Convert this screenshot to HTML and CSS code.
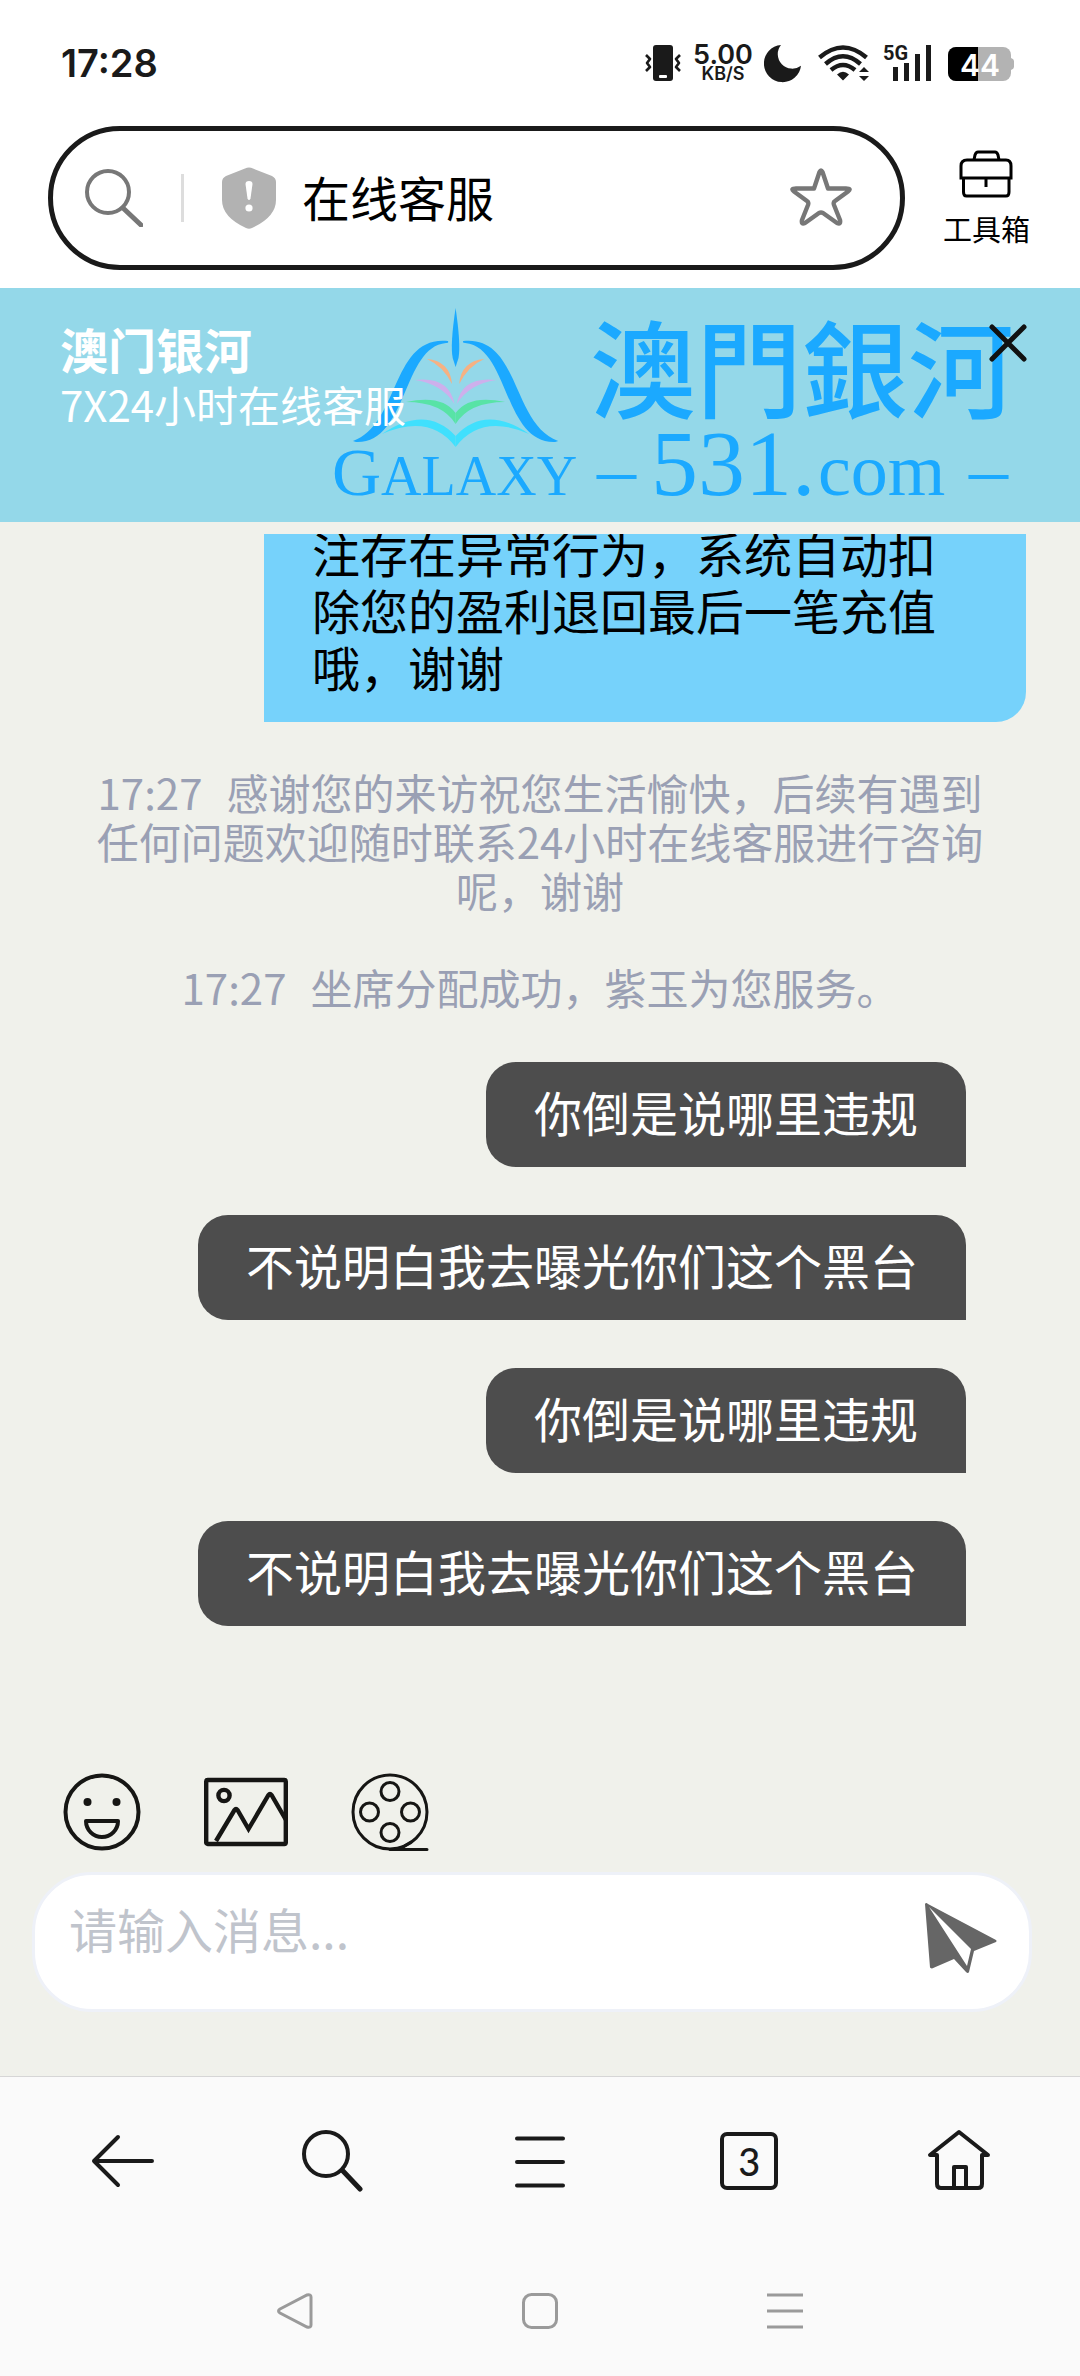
FILE: index.html
```html
<!DOCTYPE html>
<html lang="zh-CN">
<head>
  <meta charset="UTF-8">
  <meta name="viewport" content="width=device-width, initial-scale=1">
  <title>在线客服</title>
  <link rel="stylesheet" href="styles.css">
</head>
<body>
  <div class="status-bar">
    <span class="clock">17:28</span>
    <div class="status-icons">
      <svg width="38" height="40" viewBox="0 0 38 40">
        <rect x="9" y="2" width="20" height="36" rx="3" fill="#1a1a1a"/>
        <rect x="15" y="32" width="8" height="3" rx="1" fill="#fff"/>
        <path d="M2 12l4 4-3 4 3 4-4 4M36 12l-4 4 3 4-3 4 4 4" fill="none" stroke="#1a1a1a" stroke-width="2.6" stroke-linejoin="round"/>
      </svg>
      <div class="net-speed">
        <span class="speed-value">5.00</span>
        <span class="speed-unit">KB/S</span>
      </div>
      <svg width="40" height="40" viewBox="0 0 40 40">
        <path d="M17 2A18.6 18.6 0 1 0 37 22.7A14.5 14.5 0 0 1 17 2z" fill="#1a1a1a"/>
      </svg>
      <svg width="54" height="40" viewBox="0 0 54 40">
        <g fill="none" stroke="#1a1a1a" stroke-width="4.4">
          <path d="M3.500 14.500Q27-5.500 50.500 14.500"/>
          <path d="M9.500 21Q27 5.500 44.500 21"/>
          <path d="M15 27Q27 17 39 27"/>
        </g>
        <path d="M21 31.500Q27 26 33 31.500L27 37.500zM48 24l5 5H43zM48 38l5-5H43z" fill="#1a1a1a"/>
      </svg>
      <svg width="54" height="40" viewBox="0 0 54 40">
        <text x="1" y="17" class="signal-type">5G</text>
        <path d="M11 24h5v14h-5zM22 20h5v18h-5zM33 11h5v27h-5zM44 2h5v36h-5z" fill="#1a1a1a"/>
      </svg>
      <svg width="66" height="40" viewBox="0 0 66 40">
        <rect x="0" y="4" width="63" height="34" rx="8" fill="#b3b3b3"/>
        <path d="M63 15q3 1 3 3v6q0 2-3 3z" fill="#b3b3b3"/>
        <path d="M30 4H8a8 8 0 0 0-8 8v18a8 8 0 0 0 8 8h22z" fill="#000"/>
        <text x="32" y="33" text-anchor="middle" class="battery-level">44</text>
      </svg>
    </div>
  </div>

  <div class="browser-bar">
    <div class="address">
      <svg width="58" height="58" viewBox="0 0 58 58" fill="none" stroke="#777" stroke-width="4">
        <circle cx="23" cy="23" r="21"/>
        <path d="M38 39l18 17" stroke-width="5" stroke-linecap="round"/>
      </svg>
      <span class="divider"></span>
      <svg class="shield" width="54" height="62" viewBox="0 0 54 62">
        <path d="M23 1.500q4-2 8 0L50 9q4 2 4 6v18q0 17-24 28-3 1.500-6 0Q0 50 0 33V15q0-4 4-6z" fill="#b2b2b2"/>
        <path d="M23.500 17q0-3 3.500-3t3.500 3l-2 14.500q-1.500 3-3 0z" fill="#fff"/>
        <circle cx="27" cy="41" r="3.600" fill="#fff"/>
      </svg>
      <input class="address-input" type="text" value="在线客服" aria-label="地址">
      <button class="icon-btn" aria-label="收藏">
        <svg width="62" height="60" viewBox="0 0 62 60" fill="none" stroke="#777" stroke-width="4.4" stroke-linejoin="round">
          <path d="M29.500 4q1.500-3 3 0L38 20.500h18q6 0 2 3L45 33q-2 1-1 4l6 15q1 5-3 3L33 45q-2-1-4 0l-14 10q-4 2-3-3l6-15q1-3-1-4L4 23.500q-4-3 2-3h18z"/>
        </svg>
      </button>
    </div>
    <button class="toolbox">
      <svg width="54" height="48" viewBox="0 0 54 48" fill="none" stroke="#000" stroke-width="3">
        <path d="M15 10l1-5q1-3 3-3h17q2 0 3 3l1 5"/>
        <path d="M2 28V16q0-6 6-6h39q5 0 5 6v12z"/>
        <path d="M4.500 28v14q0 4 3 4H47q3 0 3-4V28M27 28v9"/>
      </svg>
      <span>工具箱</span>
    </button>
  </div>

  <header class="banner">
    <svg class="banner-logo" width="690" height="210" viewBox="0 0 690 210" fill="#1ba9ff">
      <path d="M125.600 8Q131 45 128.500 58L125.600 67L122.700 58Q120 45 125.600 8z"/>
      <g id="wing">
        <path d="M23 141C70 124 61 35 118 41Q119 43 116 43C72 47 78 144 26 142z"/>
        <path d="M97 59Q120 61 122 84Q113 66 97 59z" fill="#f5b183"/>
        <path d="M85 80Q119 76 124.500 104Q112 84 85 80z" fill="#cdb0ec"/>
        <path d="M76 102Q112 94 125.600 113V124Q112 102 76 102z" fill="#58e3a6"/>
        <path d="M52 134Q96 104 125.600 136V147Q100 113 52 134z" fill="#40e0fd"/>
      </g>
      <use href="#wing" transform="translate(251.200 0) scale(-1 1)"/>
      <text x="2" y="195" class="logo-latin logo-cap">G<tspan class="logo-small">ALAXY</tspan></text>
      <text x="260" y="110" class="logo-name">澳門銀河</text>
      <text x="267" y="195" class="logo-latin logo-dash">–</text>
      <text x="321" y="195" class="logo-latin logo-digits">531.</text>
      <text x="488" y="195" class="logo-latin logo-com">com</text>
      <text x="639" y="195" class="logo-latin logo-dash">–</text>
    </svg>
    <div class="banner-text">
      <h1>澳门银河</h1>
      <p>7X24小时在线客服</p>
    </div>
    <button class="icon-btn close-btn" aria-label="关闭">
      <svg width="38" height="38" viewBox="0 0 38 38">
        <path d="M3 3l32 32M35 3L3 35" stroke="#111" stroke-width="5" stroke-linecap="round"/>
      </svg>
    </button>
  </header>

  <main class="chat">
    <div class="bubble agent">注存在异常行为，系统自动扣除您的盈利退回最后一笔充值哦，谢谢</div>
    <p class="notice"><span class="time">17:27</span>感谢您的来访祝您生活愉快，后续有遇到任何问题欢迎随时联系24小时在线客服进行咨询呢，谢谢</p>
    <p class="notice"><span class="time">17:27</span>坐席分配成功，紫玉为您服务。</p>
    <div class="bubble visitor">你倒是说哪里违规</div>
    <div class="bubble visitor">不说明白我去曝光你们这个黑台</div>
    <div class="bubble visitor">你倒是说哪里违规</div>
    <div class="bubble visitor">不说明白我去曝光你们这个黑台</div>
  </main>

  <form class="composer">
    <div class="composer-tools">
      <button type="button" class="icon-btn" aria-label="表情">
        <svg width="78" height="78" viewBox="0 0 78 78" fill="none" stroke="#161614" stroke-width="4">
          <circle cx="39" cy="39" r="36.500"/>
          <circle cx="24.500" cy="29" r="4" fill="#161614" stroke="none"/>
          <circle cx="53.500" cy="29" r="4" fill="#161614" stroke="none"/>
          <path d="M23 48h32a16 16 0 0 1-32 0z" stroke-linejoin="round"/>
        </svg>
      </button>
      <button type="button" class="icon-btn" aria-label="图片">
        <svg width="84" height="78" viewBox="0 0 84 78" fill="none" stroke="#161614" stroke-width="4.400">
          <rect x="2.200" y="7" width="79.600" height="64" rx="1.500"/>
          <circle cx="20" cy="22.500" r="5.600"/>
          <path d="M12 68l18.500-31q1.500-2 3 0L44.500 56l20-34q1.500-2 3 0L82 47"/>
        </svg>
      </button>
      <button type="button" class="icon-btn" aria-label="视频">
        <svg width="78" height="78" viewBox="0 0 78 78" fill="none" stroke="#161614" stroke-width="3">
          <circle cx="39" cy="39" r="37"/>
          <circle cx="39" cy="18.500" r="9"/>
          <circle cx="39" cy="59.500" r="9"/>
          <circle cx="18.500" cy="39" r="9"/>
          <circle cx="59.500" cy="39" r="9"/>
          <path d="M39 76.400h37M50 75l10-6" stroke-linecap="round"/>
        </svg>
      </button>
    </div>
    <div class="composer-box">
      <textarea placeholder="请输入消息..." aria-label="消息"></textarea>
      <button type="button" class="icon-btn" aria-label="发送">
        <svg width="72" height="78" viewBox="0 0 72 78">
          <path fill="#666" fill-rule="evenodd" d="M0 1q1-2 3 0l68 36q1 1 0 2L49 48l-5 21q-1 2-3 0L29 56 7 65.500q-1 0-2-1zM4 4l38 59 4-17z"/>
        </svg>
      </button>
    </div>
  </form>

  <footer class="bottom">
    <nav class="browser-nav">
      <button class="icon-btn" aria-label="后退">
        <svg width="64" height="64" viewBox="0 0 64 64"><path d="M28 8L4 32l24 24M4 32h58"/></svg>
      </button>
      <button class="icon-btn" aria-label="搜索">
        <svg width="64" height="64" viewBox="0 0 64 64"><circle cx="27" cy="25" r="22"/><path d="M43.500 41.500L61 60" stroke-width="5"/></svg>
      </button>
      <button class="icon-btn" aria-label="菜单">
        <svg width="64" height="64" viewBox="0 0 64 64"><path d="M9 9.500h46M9 33h46M9 56.500h46"/></svg>
      </button>
      <button class="tab-count" aria-label="标签页">3</button>
      <button class="icon-btn" aria-label="主页">
        <svg width="64" height="64" viewBox="0 0 64 64"><path d="M33 3L4 26h7v29q0 4 4 4h37q4 0 4-4V26h6zM28 59V38h12v21"/></svg>
      </button>
    </nav>
    <div class="system-nav">
      <button class="icon-btn" aria-label="返回">
        <svg width="36" height="36" viewBox="0 0 36 36"><path d="M3 16L30 2q4-1 4 2v28q0 3-4 2L3 20q-3-2 0-4z"/></svg>
      </button>
      <button class="icon-btn" aria-label="桌面">
        <svg width="36" height="36" viewBox="0 0 36 36"><rect x="1.500" y="1.500" width="33" height="33" rx="8"/></svg>
      </button>
      <button class="icon-btn" aria-label="最近任务">
        <svg width="36" height="36" viewBox="0 0 36 36"><path d="M0 2h36M0 18h36M0 34h36"/></svg>
      </button>
    </div>
  </footer>
</body>
</html>
```

FILE: styles.css
```css
:root {
  --ink: #1a1a1a;
  --page-bg: #f0f1eb;
  --banner-bg: #94d8e9;
  --agent-bg: #76d2fb;
  --visitor-bg: #4d4d4d;
  --notice-color: #9aa0b4;
  --bar-bg: #fafafa;
}

* {
  box-sizing: border-box;
}

body {
  margin: 0;
  height: 100vh;
  display: flex;
  flex-direction: column;
  background: var(--page-bg);
  color: #000;
  font-family: "Noto Sans CJK SC", sans-serif;
}

svg {
  display: block;
}

button {
  font-family: inherit;
  color: inherit;
  cursor: pointer;
}

.icon-btn {
  padding: 0;
  border: none;
  background: none;
}

/* Status bar */
.status-bar {
  height: 126px;
  padding: 0 66px 0 61px;
  display: flex;
  align-items: center;
  justify-content: space-between;
  background: #fff;
  color: var(--ink);
  font-family: Inter, sans-serif;
  font-weight: 600;
}

.clock {
  font-size: 38px;
}

.status-icons {
  display: flex;
  align-items: center;
  gap: 12px;
}

.net-speed {
  width: 58px;
  display: flex;
  flex-direction: column;
  align-items: center;
}

.speed-value {
  font-size: 27px;
  line-height: 22px;
}

.speed-unit {
  font-size: 18px;
  line-height: 16px;
}

.signal-type {
  font: bold 20px Roboto, sans-serif;
  fill: var(--ink);
}

.battery-level {
  font: 600 30px Inter, sans-serif;
  fill: #fff;
}

/* Address bar */
.browser-bar {
  padding: 0 50px 18px 48px;
  display: flex;
  align-items: center;
  gap: 38px;
  background: #fff;
}

.address {
  flex: 1;
  min-width: 0;
  height: 144px;
  padding: 0 48px 0 32px;
  display: flex;
  align-items: center;
  border: 5px solid var(--ink);
  border-radius: 72px;
}

.divider {
  width: 3px;
  height: 48px;
  margin: 0 38px;
  background: #ddd;
}

.address-input {
  flex: 1;
  min-width: 0;
  margin-left: 26px;
  padding: 0 0 4px;
  border: none;
  outline: none;
  background: none;
  color: #000;
  font-family: inherit;
  font-size: 48px;
}

.toolbox {
  padding: 0;
  border: none;
  background: none;
  display: flex;
  flex-direction: column;
  align-items: center;
  gap: 12px;
  font-size: 29px;
  line-height: 36px;
}

/* Banner */
.banner {
  position: relative;
  height: 234px;
  padding: 32px 53px 0 60px;
  display: flex;
  align-items: flex-start;
  justify-content: space-between;
  background: var(--banner-bg);
  color: #fff;
}

.banner-logo {
  position: absolute;
  top: 12px;
  right: 60px;
}

.banner-text {
  position: relative;
}

.banner-text h1,
.banner-text p {
  margin: 0;
  line-height: 56px;
}

.banner-text h1 {
  font-size: 48px;
}

.banner-text p {
  font-size: 42px;
}

.close-btn {
  position: relative;
  margin-top: 4px;
}

.logo-latin {
  font-family: "Liberation Serif", serif;
}

.logo-cap {
  font-size: 68px;
}

.logo-small {
  font-size: 56px;
}

.logo-name {
  font: 500 106px "Noto Sans CJK TC", sans-serif;
}

.logo-digits {
  font-size: 94px;
}

.logo-com {
  font-size: 74px;
}

.logo-dash {
  font-size: 78px;
}

/* Messages, newest at the bottom */
.chat {
  flex: 1;
  min-height: 0;
  margin-top: 12px;
  padding: 0 54px 99px;
  display: flex;
  flex-direction: column;
  justify-content: flex-end;
  gap: 48px;
  overflow: hidden;
}

.bubble {
  flex-shrink: 0;
  align-self: flex-end;
  padding: 21px 48px 27px;
  font-size: 48px;
  line-height: 57px;
}

.agent {
  max-width: 762px;
  background: var(--agent-bg);
  border-radius: 30px 30px 30px 0;
}

/* the agent bubble is squared on the left, the visitor one on the right */
.bubble.agent {
  border-radius: 30px 30px 30px 0;
}

.visitor {
  max-width: 780px;
  margin-right: 60px;
  background: var(--visitor-bg);
  border-radius: 30px 30px 0 30px;
  color: #fff;
}

.notice {
  flex-shrink: 0;
  margin: -3px 0 0;
  padding: 0 30px 3px;
  color: var(--notice-color);
  font-size: 42px;
  line-height: 49px;
  text-align: center;
}

.time {
  margin-right: 24px;
}

/* Message input */
.composer {
  padding: 48px 48px 64px 32px;
  display: flex;
  flex-direction: column;
  gap: 21px;
}

.composer-tools {
  padding-left: 31px;
  display: flex;
  gap: 63px;
}

.composer-box {
  height: 140px;
  padding: 0 32px 0 34px;
  display: flex;
  align-items: center;
  background: #fff;
  border: 3px solid #eef1f8;
  border-radius: 60px;
}

.composer-box textarea {
  flex: 1;
  min-width: 0;
  height: 100%;
  padding: 25px 0 0;
  border: none;
  outline: none;
  resize: none;
  background: none;
  font-family: inherit;
  font-size: 48px;
  line-height: 56px;
}

.composer-box textarea::placeholder {
  color: #c0c4cc;
}

/* Bottom bars */
.bottom {
  background: var(--bar-bg);
  border-top: 1px solid #d6d6d6;
}

.browser-nav {
  height: 168px;
  padding: 0 17px;
  display: grid;
  grid-template-columns: repeat(5, 1fr);
  place-items: center;
}

.browser-nav svg {
  fill: none;
  stroke: var(--ink);
  stroke-width: 4;
  stroke-linecap: round;
  stroke-linejoin: round;
}

.tab-count {
  width: 58px;
  height: 58px;
  padding: 0;
  border: 4px solid var(--ink);
  border-radius: 7px;
  background: none;
  color: var(--ink);
  font: 500 38px/50px Lato, sans-serif;
}

.system-nav {
  height: 131px;
  display: grid;
  grid-template-columns: repeat(3, 245px);
  justify-content: center;
  place-items: center;
}

.system-nav svg {
  fill: none;
  stroke: #9a9a9a;
  stroke-width: 3;
}
```
